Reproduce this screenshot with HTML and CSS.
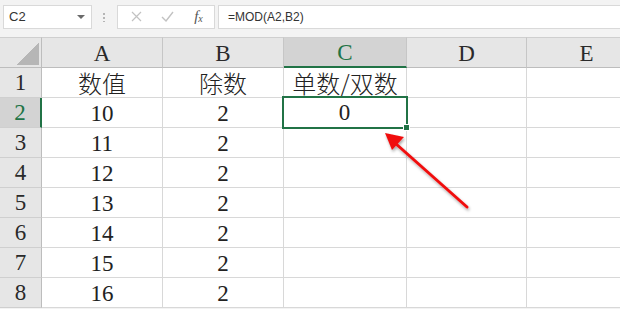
FILE: index.html
```html
<!DOCTYPE html>
<html lang="zh-CN">
  <head>
    <meta charset="UTF-8" />
    <title>MOD</title>
    <link rel="stylesheet" href="styles.css">
  </head>
  <body>
    <div class="formula-bar">
      <div class="name-box">
        <span>C2</span>
        <i class="caret"></i>
      </div>
      <div class="grip"></div>
      <div class="btn-box">
        <span class="btn">
          <svg width="11" height="11" viewBox="0 0 11 11"><path d="M1 1 L10 10 M10 1 L1 10" stroke="#c2c2c2" stroke-width="1.2" fill="none" /></svg>
        </span>
        <span class="btn">
          <svg width="13" height="11" viewBox="0 0 13 11"><path d="M1 6 L5 10 L12 1" stroke="#c2c2c2" stroke-width="1.4" fill="none" /></svg>
        </span>
        <span class="btn fx"><em>f</em><small>x</small></span>
      </div>
      <div class="formula">=MOD(A2,B2)</div>
    </div>

    <div class="sheet">
      <div class="grid">
        <div class="hd corner"><i></i></div>
        <div class="hd col">A</div>
        <div class="hd col">B</div>
        <div class="hd col active">C</div>
        <div class="hd col">D</div>
        <div class="hd col">E</div>

        <div class="hd row">1</div>
        <div class="cell cjk">数值</div>
        <div class="cell cjk">除数</div>
        <div class="cell cjk">单数/双数</div>
        <div class="cell"></div>
        <div class="cell"></div>

        <div class="hd row active">2</div>
        <div class="cell">10</div>
        <div class="cell">2</div>
        <div class="cell selected">0</div>
        <div class="cell"></div>
        <div class="cell"></div>

        <div class="hd row">3</div>
        <div class="cell">11</div>
        <div class="cell">2</div>
        <div class="cell"></div>
        <div class="cell"></div>
        <div class="cell"></div>

        <div class="hd row">4</div>
        <div class="cell">12</div>
        <div class="cell">2</div>
        <div class="cell"></div>
        <div class="cell"></div>
        <div class="cell"></div>

        <div class="hd row">5</div>
        <div class="cell">13</div>
        <div class="cell">2</div>
        <div class="cell"></div>
        <div class="cell"></div>
        <div class="cell"></div>

        <div class="hd row">6</div>
        <div class="cell">14</div>
        <div class="cell">2</div>
        <div class="cell"></div>
        <div class="cell"></div>
        <div class="cell"></div>

        <div class="hd row">7</div>
        <div class="cell">15</div>
        <div class="cell">2</div>
        <div class="cell"></div>
        <div class="cell"></div>
        <div class="cell"></div>

        <div class="hd row">8</div>
        <div class="cell">16</div>
        <div class="cell">2</div>
        <div class="cell"></div>
        <div class="cell"></div>
        <div class="cell"></div>
      </div>

      <!-- red pointer drawn over the sheet -->
      <svg class="arrow" width="620" height="272" viewBox="0 0 620 272">
        <defs>
          <filter id="shadow" x="-20%" y="-20%" width="140%" height="140%">
            <feDropShadow dx="1" dy="2" stdDeviation="1.5" flood-color="#000" flood-opacity="0.35" />
          </filter>
        </defs>
        <g filter="url(#shadow)">
          <line x1="467" y1="170" x2="395" y2="106" stroke="#f00f0f" stroke-width="3" stroke-linecap="round" />
          <path d="M385 96 L404 100 L392 113 Z" fill="#f00f0f" />
        </g>
      </svg>
    </div>
  </body>
</html>
```

FILE: styles.css
```css
body {
  margin: 0;
  width: 620px;
  height: 309px;
  overflow: hidden;
  background-color: #f3f3f3;
  font-family: "Liberation Serif", "Noto Sans CJK SC", serif;
}

/* formula bar */
.formula-bar {
  display: flex;
  align-items: center;
  height: 37px;
  padding: 0 0 4px 3px;
  box-sizing: border-box;
  font: 12px/1 "Liberation Sans", "Noto Sans", sans-serif;
  color: #333;
}
.name-box,
.btn-box,
.formula {
  display: flex;
  align-items: center;
  height: 24px;
  box-sizing: border-box;
  border: 1px solid #d9d9d9;
  background-color: #fff;
}
.name-box {
  width: 89px;
  padding: 0 6px 0 5px;
  justify-content: space-between;
  font-size: 13px;
}
.caret {
  width: 0;
  height: 0;
  border-left: 4px solid transparent;
  border-right: 4px solid transparent;
  border-top: 4px solid #6a6a6a;
}
.grip {
  width: 2px;
  height: 10px;
  margin: 0 12px 0 11px;
  background: radial-gradient(circle, #b5b5b5 0.8px, transparent 1px) 0 0 / 2px 4px;
}
.btn-box {
  width: 98px;
  padding-left: 12px;
  gap: 18px;
}
.btn {
  display: flex;
  align-items: center;
  justify-content: center;
  width: 13px;
}
.fx {
  font-family: "Liberation Serif", serif;
  color: #555;
}
.fx em {
  font-size: 15px;
}
.fx small {
  font-size: 10px;
  font-style: italic;
  margin-top: 4px;
}
.formula {
  flex: 1;
  margin-left: 3px;
  padding-left: 9px;
  border-right: 0;
}

/* sheet grid */
.sheet {
  position: relative;
}
.grid {
  display: grid;
  grid-template-columns: 42px 121px 121px 123px 120px 120px;
  grid-template-rows: 31px repeat(8, 30px);
  background-color: #fff;
  font-size: 23px;
  color: #222;
}
.hd,
.cell {
  display: flex;
  align-items: center;
  justify-content: center;
  box-sizing: border-box;
  border-right: 1px solid #d8d8d8;
  border-bottom: 1px solid #d8d8d8;
}
.hd {
  background-color: #e6e6e6;
  color: #2a2a2a;
}
.hd.col {
  border-top: 1px solid #cfcfcf;
  border-right-color: #c6c6c6;
  border-bottom-color: #bdbdbd;
  padding-top: 2px;
}
.hd.row {
  border-right-color: #bdbdbd;
  border-bottom-color: #cfcfcf;
  padding-top: 1px;
}
.corner {
  border-top: 1px solid #cfcfcf;
  border-bottom-color: #bdbdbd;
  border-right-color: #bdbdbd;
  align-items: flex-end;
  justify-content: flex-end;
  padding: 0 2px 2px 0;
}
.corner i {
  width: 23px;
  height: 23px;
  background: linear-gradient(to bottom right, transparent 50%, #b6b6b6 50%);
}
.hd.active {
  background-color: #d3d3d3;
  color: #217346;
}
.hd.col.active {
  border-bottom: 2px solid #217346;
}
.hd.row.active {
  border-right: 2px solid #217346;
}
.cell {
  padding-top: 2px;
}
.cell.cjk {
  font-family: "Noto Sans CJK SC", sans-serif;
  font-size: 24px;
  font-weight: 300;
  padding-top: 0;
}
.cell.selected {
  position: relative;
  outline: 2px solid #217346;
  outline-offset: -1px;
  margin: -1px 0 0 -1px;
  z-index: 1;
}
.cell.selected::after {
  content: "";
  position: absolute;
  right: -4px;
  bottom: -4px;
  width: 5px;
  height: 5px;
  background-color: #217346;
  border: 1px solid #fff;
}

.arrow {
  position: absolute;
  top: 0;
  left: 0;
  pointer-events: none;
}
```
